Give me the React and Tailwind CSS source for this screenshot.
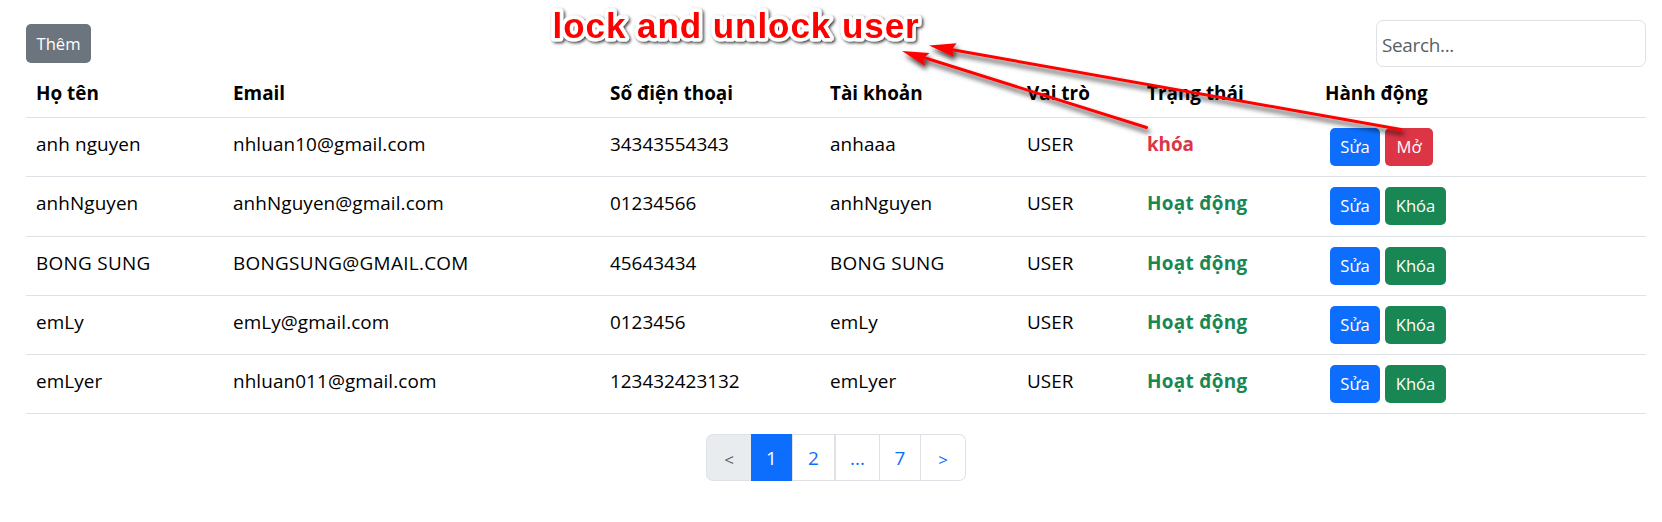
const columns = ["Họ tên", "Email", "Số điện thoại", "Tài khoản", "Vai trò", "Trạng thái", "Hành động"];

const users = [
  { name: "anh nguyen", email: "nhluan10@gmail.com", phone: "34343554343", account: "anhaaa", role: "USER", locked: true },
  { name: "anhNguyen", email: "anhNguyen@gmail.com", phone: "01234566", account: "anhNguyen", role: "USER" },
  { name: "BONG SUNG", email: "BONGSUNG@GMAIL.COM", phone: "45643434", account: "BONG SUNG", role: "USER" },
  { name: "emLy", email: "emLy@gmail.com", phone: "0123456", account: "emLy", role: "USER" },
  { name: "emLyer", email: "nhluan011@gmail.com", phone: "123432423132", account: "emLyer", role: "USER" },
];

const grid = "grid grid-cols-[197px_377px_220px_197px_120px_178px_1fr] border-b border-[#dee2e6] text-[18.9px] leading-[30px]";
const button = "flex items-center justify-center rounded-[5px] text-[16.6px] leading-none text-white";

// Capital-only values get slightly wider tracking.
const tracking = (text) => (text.startsWith("BONG") ? "tracking-[0.3px]" : "tracking-[0.1px]");

function Row({ user, tall }) {
  return (
    <div className={`${grid} ${tall ? "h-[60px]" : "h-[59px]"}`}>
      <div className={`pt-[11px] pl-[10px] ${tracking(user.name)}`}>{user.name}</div>
      <div className={`pt-[11px] pl-[10px] ${tracking(user.email)}`}>{user.email}</div>
      <div className="pt-[11px] pl-[10px]">{user.phone}</div>
      <div className={`pt-[11px] pl-[10px] ${tracking(user.account)}`}>{user.account}</div>
      <div className="pt-[11px] pl-[10px]">{user.role}</div>
      <div className={`pt-[11px] pl-[10px] font-bold ${user.locked ? "tracking-[-0.1px] text-[#dc3545]" : "tracking-[0.3px] text-[#198754]"}`}>
        {user.locked ? "khóa" : "Hoạt động"}
      </div>
      <div className="flex gap-[5px] pt-[10px] pl-[15px]">
        <button className={`${button} h-[38px] w-[50px] bg-[#0d6efd] pt-px`}>Sửa</button>
        {user.locked ? (
          <button className={`${button} h-[38px] w-[48px] bg-[#dc3545] pt-px`}>Mở</button>
        ) : (
          <button className={`${button} h-[38px] w-[61px] bg-[#198754] pt-px`}>Khóa</button>
        )}
      </div>
    </div>
  );
}

function Pagination() {
  const cell = "flex items-center justify-center border-y border-r border-[#dee2e6] pt-0.5";
  return (
    <nav className="ml-[680px] mt-5 flex h-[47px] w-[260px] text-[18.9px] leading-none text-[#0d6efd]">
      <span className="flex w-[45px] items-center justify-center rounded-l-[7px] border-y border-l border-[#dee2e6] bg-[#e9ecef] pt-1 text-[17px] text-[#5c6269]">&lt;</span>
      <span className="flex w-[41px] items-center justify-center bg-[#0d6efd] pt-0.5 text-white">1</span>
      <span className={`${cell} w-[43px] border-l`}>2</span>
      <span className={`${cell} w-[45px] border-l`}>...</span>
      <span className={`${cell} w-[41px]`}>7</span>
      <span className="flex w-[45px] items-center justify-center rounded-r-[7px] border-y border-r border-[#dee2e6] pt-1 text-[17px]">&gt;</span>
    </nav>
  );
}

function Annotation() {
  return (
    <svg className="pointer-events-none absolute left-0 top-0" width="1662" height="522">
      <defs>
        <filter id="shade" x="-5%" y="-30%" width="110%" height="170%">
          <feDropShadow dx="2" dy="4" stdDeviation="2.8" floodColor="#000" floodOpacity="0.75" />
        </filter>
        <filter id="textShade" x="-5%" y="-30%" width="110%" height="170%">
          <feDropShadow dx="1.5" dy="1.5" stdDeviation="1.5" floodColor="#000" floodOpacity="0.8" />
        </filter>
      </defs>
      <g filter="url(#textShade)">
        <text x="552.5" y="38.3" className="font-['Liberation_Sans',sans-serif] text-[35px] font-bold tracking-[0.95px]" fill="#f00" stroke="#fff" strokeWidth="7" strokeLinejoin="round" paintOrder="stroke">
          lock and unlock user
        </text>
      </g>
      <g filter="url(#shade)" fill="#f00" stroke="#f00">
        <path d="M923 57.3 L1146.500 127.500" strokeWidth="3" strokeLinecap="round" />
        <path d="M902 51 L929.500 53 L923.800 58 L925 66 Z" stroke="none" />
        <path d="M951 49.500 L1401 129.500" strokeWidth="3" strokeLinecap="round" />
        <path d="M929 45.500 L956.500 43.300 L952 49.500 L954 57 Z" stroke="none" />
      </g>
    </svg>
  );
}

export default function App() {
  return (
    <div className="relative h-[522px] w-[1662px] overflow-hidden bg-white pl-[26px] pr-4 pt-5 font-['Open_Sans','Noto_Sans',sans-serif] text-black">
      <div className="flex h-[47px] justify-between">
        <button className={`${button} mt-1 h-[39px] w-[65px] bg-[#6c757d] pt-px`}>Thêm</button>
        <input
          placeholder="Search..."
          className="h-[47px] w-[270px] rounded-[7px] border border-[#dee2e6] px-[5px] pt-0.5 text-[18.9px] tracking-[-0.3px] placeholder:text-[#595f65] placeholder:opacity-100"
        />
      </div>
      <div className={`${grid} h-[51px] font-bold`}>
        {columns.map((c) => (
          <div key={c} className="pt-[11px] pl-[10px]">{c}</div>
        ))}
      </div>
      {users.map((u, i) => (
        <Row key={u.name} user={u} tall={i === 1} />
      ))}
      <Pagination />
      <Annotation />
    </div>
  );
}
